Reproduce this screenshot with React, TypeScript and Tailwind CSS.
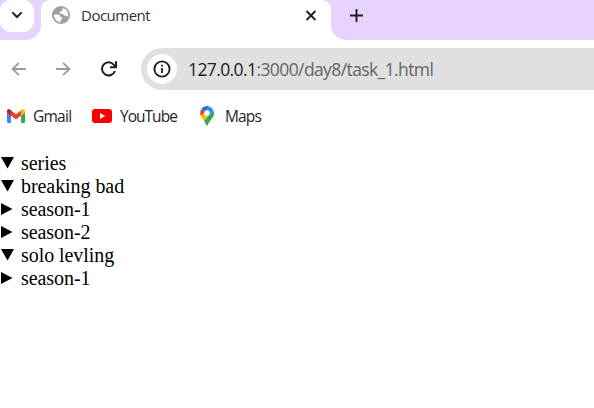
const rows = [
  { label: 'series', open: true },
  { label: 'breaking bad', open: true },
  { label: 'season-1', open: false },
  { label: 'season-2', open: false },
  { label: 'solo levling', open: true },
  { label: 'season-1', open: false },
];

function TabStrip() {
  return (
    <header className="flex h-10 bg-white">
      <div className="h-10 w-[41px] shrink-0 rounded-br-[15px] bg-[#e8d3ff]">
        <button className="flex h-8 w-[34px] items-center justify-center rounded-[11px] bg-white">
          <svg className="-mt-0.5 block" width="12" height="8" viewBox="0 0 12 8" fill="none" stroke="#1f1f1f" strokeWidth="2">
            <path d="M1.3 1.4 6 6l4.7-4.6" />
          </svg>
        </button>
      </div>
      <div className="h-10 w-[290px] shrink-0 bg-[linear-gradient(#e8d3ff,#e8d3ff)] bg-[length:100%_12px] bg-no-repeat">
        <div className="flex h-full items-start rounded-t-[9px] bg-white pl-[11px]">
          <svg className="mt-1.5 shrink-0" width="18" height="18" viewBox="0 0 18 18">
            <circle cx="9" cy="9" r="9" fill="#9aa0a6" />
            <path d="M10.5 1.9A7.2 7.2 0 0 1 16.2 9c0 .8-.1 1.4-.3 2-.5-1-1.3-1.3-2.5-1.3-1.6 0-1.6-1.5-3.2-1.7-1.3-.1-2.6-.3-2.6-1.3 0-1.2 1-1.5 2-1.7 1.3-.3.7-1.8.9-3.1z" fill="white" />
            <path d="M1.9 8.6h3.5c2 0 2.7.9 2.9 2 .2.9 1.1 1.1 2.3 1.1-.1 1.6-1.7 1.2-1.9 2.6v1.9A7.2 7.2 0 0 1 1.9 8.6z" fill="white" />
          </svg>
          <span className="ml-[11px] mt-[5px] w-[224px] shrink-0 text-[15px] leading-5 tracking-[-0.5px] text-[#303030]">Document</span>
          <svg className="mt-[10px] shrink-0" width="12" height="11" viewBox="0 0 12 11" fill="none" stroke="#1f1f1f" strokeWidth="1.8">
            <path d="m1.6 1 8.8 9m0-9-8.8 9" />
          </svg>
        </div>
      </div>
      <div className="h-10 flex-1 rounded-bl-[15px] bg-[#e8d3ff] pl-[19px] pt-[9px]">
        <svg width="13" height="13" viewBox="0 0 13 13" stroke="#1f1f1f" strokeWidth="1.9">
          <path d="M6.5 0v13M0 6.5h13" />
        </svg>
      </div>
    </header>
  );
}

function Toolbar() {
  return (
    <nav className="flex h-[58px] items-center">
      <svg className="ml-[11px] shrink-0" width="15" height="14" viewBox="0 0 15 14" fill="none" stroke="#9b9b9b" strokeWidth="1.8">
        <path d="M15 7H1.5M8 .8 1.5 7 8 13.2" />
      </svg>
      <svg className="ml-[30px] shrink-0" width="15" height="14" viewBox="0 0 15 14" fill="none" stroke="#9b9b9b" strokeWidth="1.8">
        <path d="M0 7h13.5M7 .8 13.5 7 7 13.2" />
      </svg>
      <svg className="ml-[30px] shrink-0" width="16" height="16" viewBox="0 0 16 16" fill="none" stroke="#1f1f1f" strokeWidth="2">
        <path d="M13.9 10A6.6 6.6 0 1 1 12.7 3.6L14.4 5.4M15 .2v6H9" />
      </svg>
      <div className="ml-6 flex h-[42px] flex-1 items-center rounded-l-full bg-[#e0e0e0] pl-1.5">
        <div className="flex size-[30px] shrink-0 items-center justify-center rounded-full bg-white">
          <svg width="18" height="18" viewBox="0 0 18 18">
            <circle cx="9" cy="9" r="7.6" fill="none" stroke="#1f1f1f" strokeWidth="1.9" />
            <path d="M8.1 4.8h1.8v1.8H8.1zM8.1 8h1.8v5.1H8.1z" fill="#1f1f1f" />
          </svg>
        </div>
        <span className="ml-[11px] whitespace-nowrap text-[17.5px] leading-6 tracking-[-0.6px] text-[#646464]">
          <span className="text-[#202020]">127.0.0.1</span>:3000/day8/task_1.html
        </span>
      </div>
    </nav>
  );
}

function Bookmarks() {
  return (
    <div className="flex h-[35px] items-center text-[15.5px] leading-5 text-[#242424]">
      <svg className="ml-[7px] shrink-0" width="18" height="14" viewBox="0 0 18 14">
        <path d="M0 2.5V12.7Q0 14 1.3 14H4V6z" fill="#4285f4" />
        <path d="M14 6v8h2.7Q18 14 18 12.7V2.5z" fill="#34a853" />
        <path d="M4 1.4v5.3l5 3.8 5-3.8V1.4L9 5.2z" fill="#ea4335" />
        <path d="M0 2.2C0 .2 2-.6 3.5.8L4 1.2v5.5L0 3.8z" fill="#c5221f" />
        <path d="M14 1.2C15.7-.7 18 .2 18 2.2v1.6l-4 2.9z" fill="#fbbc04" />
      </svg>
      <span className="ml-2 w-[59px] tracking-[-0.75px]">Gmail</span>
      <svg className="shrink-0" width="20" height="14" viewBox="0 0 20 14">
        <rect width="20" height="14" rx="3" fill="#f00" />
        <path d="m8 4 5.2 3L8 10z" fill="white" />
      </svg>
      <span className="ml-2 w-[80px] tracking-[-0.98px]">YouTube</span>
      <svg className="shrink-0" width="14" height="20" viewBox="0 0 14 20">
        <path d="M13.3 4.2c1.2 2.7.9 5.2-.7 7.5-1.8 2.6-3.8 4.2-4.6 6.9-.4 1.4-1.6 1.4-2 0-.4-1.3-1-2.6-2-3.9z" fill="#34a853" />
        <path d="m1 10.2 3.7-4 4.8 2.6-5.5 6C2.7 13.3 1.6 11.9 1 10.2z" fill="#fbbc04" />
        <path d="m1.6 2.7 3.7 3.1L1 10.2C-.2 7.6-.1 4.8 1.6 2.7z" fill="#ea4335" />
        <path d="M1.6 2.7C3.3.4 6.3-.6 9.2.4L5.2 5.7z" fill="#1a73e8" />
        <path d="M9.2.4c1.9.6 3.3 1.9 4.1 3.8L8.6 9.9 5.2 5.7z" fill="#4285f4" />
        <circle cx="7" cy="7" r="2.7" fill="white" />
      </svg>
      <span className="ml-[11px] tracking-[-0.85px]">Maps</span>
    </div>
  );
}

export default function App() {
  return (
    <div className="h-[408px] w-[594px] overflow-hidden bg-white font-['Open_Sans',sans-serif]">
      <TabStrip />
      <Toolbar />
      <Bookmarks />
      <main className="mt-[18px] font-['Liberation_Serif',serif] text-[20px] leading-[23px] tracking-[-0.06px] text-black">
        {rows.map((row, index) => (
          <div key={index} className="flex h-[23px] items-center">
            <svg className="mr-[6px] shrink-0" width="15" height="15" viewBox="0 0 15 15">
              <path d={row.open ? 'M1 2h13L7.5 13.5z' : 'M1 2v12L12.5 8z'} />
            </svg>
            <span className="whitespace-nowrap pt-px">{row.label}</span>
          </div>
        ))}
      </main>
    </div>
  );
}
